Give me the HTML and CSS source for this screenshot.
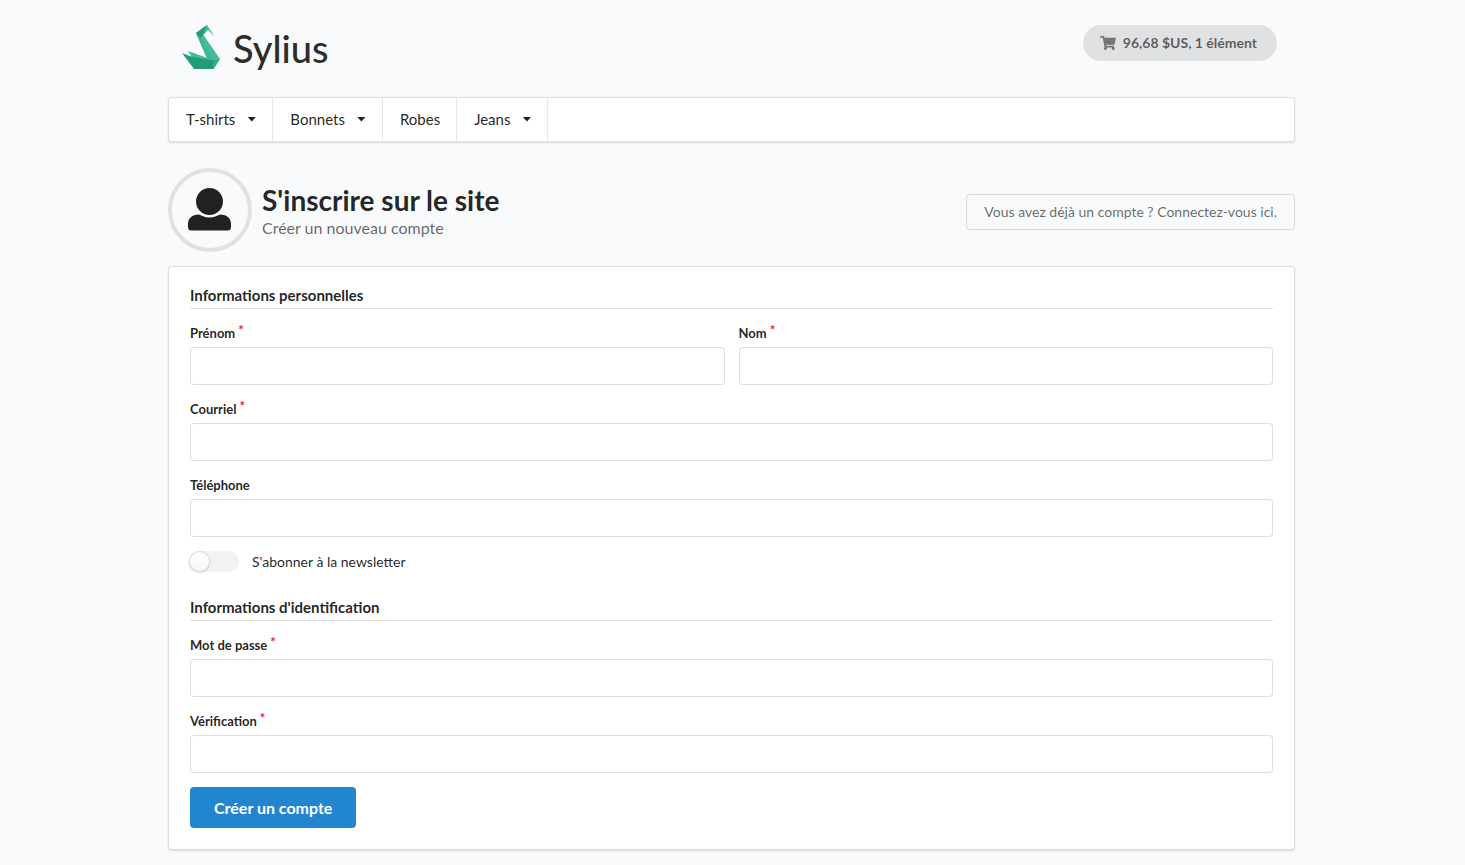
FILE: index.html
```html
<!DOCTYPE html>
<html lang="fr">
<head>
<meta charset="utf-8">
<meta name="viewport" content="width=device-width, initial-scale=1">
<title>Sylius</title>
<link rel="stylesheet" href="styles.css">
</head>
<body>
<div class="container">
  <header class="topbar">
    <a class="logo" href="#" aria-label="Sylius">
      <svg class="logo-mark" viewBox="0 0 38 45" aria-hidden="true">
        <path fill="#45bd9d" d="M14 8 25 0 32.500 11.500 26 5 21.500 10 38 34 31.500 44 26 36Z"/>
        <path fill="#249a7b" d="M14 8 25 0 22 6.500 18.500 14Z"/>
        <path fill="#3db598" d="M14 8 18.500 13 31.500 35.500 27 37Z"/>
        <path fill="#45bd9d" d="M6 26 27 33.500 29 36.500 12 36Z"/>
        <path fill="#249a7b" d="M0 28 9 31.500 31.500 35.500 31.500 44H12Z"/>
        <path fill="#33ab8b" d="M31 35.500 38 34 31.500 44Z"/>
      </svg>
      <span class="logo-text">Sylius</span>
    </a>
    <button class="cart" type="button">
      <svg class="cart-icon" viewBox="0 0 576 512" aria-hidden="true"><path fill="currentColor" d="M528.120 301.319l47.273-208C578.806 78.301 567.391 64 551.990 64H159.208l-9.166-44.810C147.758 8.021 137.930 0 126.529 0H24C10.745 0 0 10.745 0 24v16c0 13.255 10.745 24 24 24h69.883l70.248 343.435C147.325 417.100 136 435.222 136 456c0 30.928 25.072 56 56 56s56-25.072 56-56c0-15.674-6.447-29.835-16.824-40h209.647C430.447 426.165 424 440.326 424 456c0 30.928 25.072 56 56 56s56-25.072 56-56c0-22.172-12.888-41.332-31.579-50.405l5.517-24.276c3.413-15.018-8.002-29.319-23.403-29.319H218.117l-6.545-32h293.145c11.206 0 20.920-7.754 23.403-18.681z"/></svg>
      <span>96,68 $US, 1 élément</span>
    </button>
  </header>

  <nav class="menu">
    <a class="menu-item" href="#">T-shirts<span class="caret"></span></a>
    <a class="menu-item" href="#">Bonnets<span class="caret"></span></a>
    <a class="menu-item" href="#">Robes</a>
    <a class="menu-item" href="#">Jeans<span class="caret"></span></a>
  </nav>

  <main>
    <div class="page-head">
      <div class="avatar">
        <svg class="avatar-icon" viewBox="0 0 43 43" aria-hidden="true"><circle cx="21.500" cy="13.500" r="13.500"/><path d="M11 26.500C14 28 17 29.500 21.500 29.500S29 28 32 26.500C39 26.500 43 30.500 43 36V39Q43 42.500 39.500 42.500H3.500Q0 42.500 0 39V36C0 30.500 4 26.500 11 26.500Z"/></svg>
      </div>
      <div class="page-title">
        <h1>S'inscrire sur le site</h1>
        <p>Créer un nouveau compte</p>
      </div>
      <a class="login-link" href="#">Vous avez déjà un compte ? Connectez-vous ici.</a>
    </div>

    <form class="segment">
      <h2 class="section-title">Informations personnelles</h2>
      <div class="two-fields">
        <div class="field required">
          <label for="first-name">Prénom</label>
          <input id="first-name" type="text">
        </div>
        <div class="field required">
          <label for="last-name">Nom</label>
          <input id="last-name" type="text">
        </div>
      </div>
      <div class="field required">
        <label for="email">Courriel</label>
        <input id="email" type="email">
      </div>
      <div class="field">
        <label for="phone">Téléphone</label>
        <input id="phone" type="tel">
      </div>
      <div class="toggle">
        <input id="newsletter" type="checkbox">
        <label for="newsletter">S'abonner à la newsletter</label>
      </div>

      <h2 class="section-title">Informations d'identification</h2>
      <div class="field required">
        <label for="password">Mot de passe</label>
        <input id="password" type="password">
      </div>
      <div class="field required">
        <label for="confirm">Vérification</label>
        <input id="confirm" type="password">
      </div>
      <button class="submit" type="submit">Créer un compte</button>
    </form>
  </main>
</div>
</body>
</html>
```
FILE: styles.css
```css
* {
  box-sizing: border-box;
}

body {
  margin: 0;
  padding: 24px 17px 14px 15px;
  background: #f9fafc;
  color: rgba(0, 0, 0, 0.87);
  font-family: Lato, "Liberation Sans", sans-serif;
  font-size: 14px;
  line-height: 20px;
}

h1,
h2,
p {
  margin: 0;
}

a {
  color: inherit;
  text-decoration: none;
}

button,
input {
  font-family: inherit;
}

.container {
  max-width: 1127px;
  margin: 0 auto;
}

.topbar {
  display: flex;
  justify-content: space-between;
  align-items: flex-start;
  padding: 1px 18px 0 14px;
  margin-bottom: 24px;
}

.logo {
  display: flex;
  gap: 13px;
  height: 48px;
}

.logo-mark {
  width: 38px;
  height: 45px;
}

.logo-text {
  color: #2c2d2c;
  font-size: 38px;
  font-weight: 500;
  line-height: 46px;
}

.cart {
  display: flex;
  align-items: center;
  gap: 7px;
  height: 36px;
  padding: 0 20px 1px 17px;
  border: 0;
  border-radius: 18px;
  background: #e0e1e2;
  color: rgba(0, 0, 0, 0.6);
  font-size: 14px;
  font-weight: 700;
}

.cart-icon {
  width: 16px;
  height: 14px;
  opacity: 0.8;
}

.menu {
  display: flex;
  height: 45px;
  margin-bottom: 26px;
  border: 1px solid rgba(34, 36, 38, 0.15);
  border-radius: 4px;
  background: #fff;
  box-shadow: 0 1px 2px rgba(34, 36, 38, 0.15);
}

.menu-item {
  display: flex;
  align-items: center;
  gap: 12px;
  padding: 0 16px 1px 17px;
  border-right: 1px solid rgba(34, 36, 38, 0.1);
  font-size: 15px;
}

.caret {
  width: 9px;
  height: 5px;
  background: currentColor;
  clip-path: polygon(0 0, 100% 0, 50% 100%);
}

.page-head {
  display: flex;
  align-items: center;
  margin-bottom: 14px;
}

.avatar {
  display: grid;
  place-items: center;
  width: 84px;
  height: 84px;
  padding: 0 1px 2px 0;
  margin-right: 10px;
  border: 4px solid #e0e2e2;
  border-radius: 50%;
}

.avatar-icon {
  width: 43px;
  height: 43px;
  fill: #212121;
}

.page-title {
  padding-top: 1px;
}

.page-title h1 {
  margin-bottom: 1px;
  font-size: 28px;
  line-height: 34px;
}

.page-title p {
  color: rgba(0, 0, 0, 0.6);
  font-size: 16px;
  line-height: 20px;
}

.login-link {
  margin-left: auto;
  padding: 7px 17px;
  border: 1px solid rgba(34, 36, 38, 0.15);
  border-radius: 4px;
  color: rgba(0, 0, 0, 0.6);
  margin-top: 4px;
}

.segment {
  padding: 20px 21px 21px;
  border: 1px solid rgba(34, 36, 38, 0.15);
  border-radius: 4px;
  background: #fff;
  box-shadow: 0 1px 2px rgba(34, 36, 38, 0.15);
}

.section-title {
  padding-bottom: 5px;
  margin-bottom: 14px;
  border-bottom: 1px solid rgba(34, 36, 38, 0.15);
  font-size: 15px;
  line-height: 16px;
}

.two-fields {
  display: grid;
  grid-template-columns: 1fr 1fr;
  gap: 14px;
}

.field {
  margin-bottom: 14px;
}

.field label {
  display: block;
  margin-bottom: 4px;
  font-size: 13px;
  font-weight: 700;
}

.required label::after {
  content: "*";
  margin-left: 3px;
  color: #db2828;
  line-height: 0;
  vertical-align: 3px;
}

.field input {
  display: block;
  width: 100%;
  height: 38px;
  padding: 0 14px;
  border: 1px solid rgba(34, 36, 38, 0.15);
  border-radius: 4px;
  background: #fff;
  font-size: 14px;
}

.toggle {
  display: flex;
  align-items: center;
  gap: 13px;
  height: 21px;
  margin-bottom: 27px;
}

.toggle input {
  appearance: none;
  width: 50px;
  height: 21px;
  margin: 0 0 0 -1px;
  border-radius: 11px;
  background: #f2f2f2;
}

.toggle input::before {
  content: "";
  display: block;
  width: 21px;
  height: 21px;
  border-radius: 50%;
  background: linear-gradient(#fff, #f7f7f7);
  box-shadow: 0 1px 2px rgba(34, 36, 38, 0.15), 0 0 0 1px rgba(34, 36, 38, 0.15) inset;
}

.toggle input:checked {
  background: #2185d0;
}

.toggle input:checked::before {
  margin-left: auto;
}

.submit {
  display: block;
  padding: 0 24px;
  border: 0;
  border-radius: 4px;
  background: #2185d0;
  color: #fff;
  font-size: 16px;
  font-weight: 700;
  line-height: 41px;
}
```
